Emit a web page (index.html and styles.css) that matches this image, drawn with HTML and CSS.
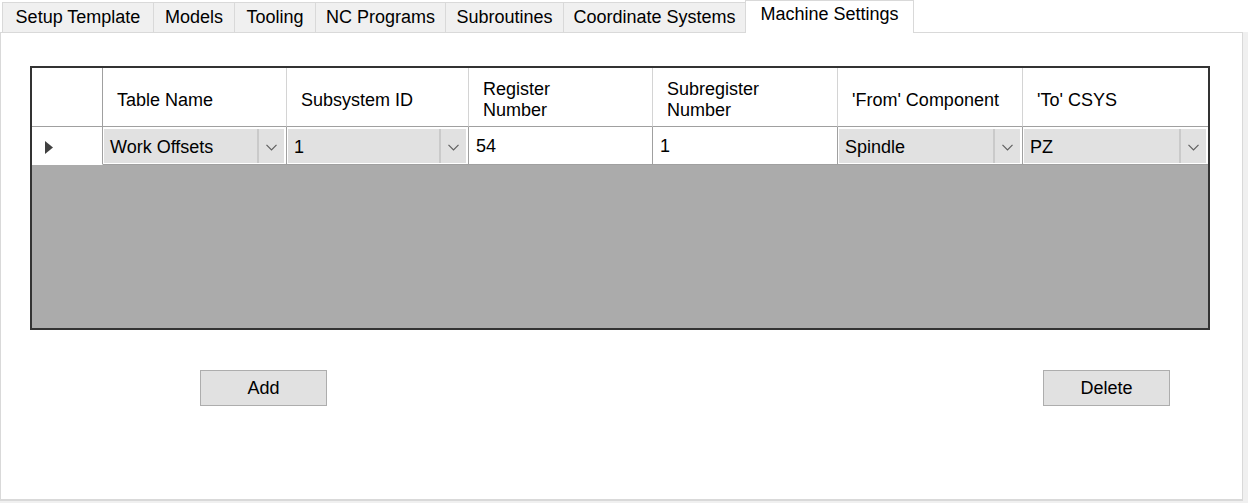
FILE: index.html
```html
<!DOCTYPE html>
<html>
<head>
<meta charset="utf-8">
<link rel="stylesheet" href="styles.css">
</head>
<body>
<div class="window">
  <div class="tabstrip">
    <div class="tab tab-setup">Setup Template</div>
    <div class="tab tab-models">Models</div>
    <div class="tab tab-tooling">Tooling</div>
    <div class="tab tab-nc">NC Programs</div>
    <div class="tab tab-sub">Subroutines</div>
    <div class="tab tab-coord">Coordinate Systems</div>
    <div class="tab tab-machine selected">Machine Settings</div>
  </div>
  <div class="panel">
    <div class="grid">
      <div class="hcell rowhead"></div>
      <div class="hcell">Table Name</div>
      <div class="hcell">Subsystem ID</div>
      <div class="hcell">Register<br>Number</div>
      <div class="hcell">Subregister<br>Number</div>
      <div class="hcell">'From' Component</div>
      <div class="hcell last">'To' CSYS</div>

      <div class="dcell rowhead"><svg class="arrow" width="8" height="13" viewBox="0 0 8 13"><polygon points="0,0 8,6.5 0,13" fill="#404040"/></svg></div>
      <div class="dcell combo-cell">
        <div class="combo"><span class="combo-text">Work Offsets</span><span class="combo-btn"><svg width="11" height="7" viewBox="0 0 11 7"><path d="M0.5 0.8 L5.5 5.8 L10.5 0.8" fill="none" stroke="#5f5f5f" stroke-width="1.2"/></svg></span></div>
      </div>
      <div class="dcell combo-cell">
        <div class="combo"><span class="combo-text">1</span><span class="combo-btn"><svg width="11" height="7" viewBox="0 0 11 7"><path d="M0.5 0.8 L5.5 5.8 L10.5 0.8" fill="none" stroke="#5f5f5f" stroke-width="1.2"/></svg></span></div>
      </div>
      <div class="dcell text-cell">54</div>
      <div class="dcell text-cell">1</div>
      <div class="dcell combo-cell">
        <div class="combo"><span class="combo-text">Spindle</span><span class="combo-btn"><svg width="11" height="7" viewBox="0 0 11 7"><path d="M0.5 0.8 L5.5 5.8 L10.5 0.8" fill="none" stroke="#5f5f5f" stroke-width="1.2"/></svg></span></div>
      </div>
      <div class="dcell combo-cell last">
        <div class="combo"><span class="combo-text">PZ</span><span class="combo-btn"><svg width="11" height="7" viewBox="0 0 11 7"><path d="M0.5 0.8 L5.5 5.8 L10.5 0.8" fill="none" stroke="#5f5f5f" stroke-width="1.2"/></svg></span></div>
      </div>
      <div class="empty"></div>
    </div>
    <div class="actions">
      <button class="btn">Add</button>
      <button class="btn">Delete</button>
    </div>
  </div>
</div>
</body>
</html>
```
FILE: styles.css
```css
* { box-sizing: border-box; }
html, body {
  margin: 0;
  padding: 0;
  background: #f0f0f0;
}
body {
  font-family: "Liberation Sans", Arial, sans-serif;
  font-size: 18px;
  color: #000;
}
.window {
  width: 1248px;
  height: 503px;
  display: flex;
  flex-direction: column;
}
.tabstrip {
  height: 32px;
  display: flex;
  align-items: flex-start;
  padding-left: 2px;
  background: #ffffff;
}
.tab {
  height: 30px;
  margin-top: 2px;
  background: #f0f0f0;
  border: 1px solid #d9d9d9;
  border-bottom: none;
  margin-right: -1px;
  line-height: 29px;
  text-align: center;
  white-space: nowrap;
  color: #000;
}
.tab-setup { width: 152px; }
.tab-models { width: 82px; }
.tab-tooling { width: 82px; }
.tab-nc { width: 131px; }
.tab-sub { width: 119px; }
.tab-coord { width: 183px; }
.tab.selected {
  width: 169px;
  height: 33px;
  margin-top: 0;
  background: #ffffff;
  line-height: 26px;
  position: relative;
  z-index: 2;
  border-color: #d9d9d9;
}
.panel {
  width: 1243px;
  height: 469px;
  background: #ffffff;
  border: 1px solid #d9d9d9;
  border-bottom-width: 2px;
  padding: 33px 32px 0 29px;
  display: flex;
  flex-direction: column;
}
.grid {
  width: 1180px;
  height: 264px;
  border: 2px solid #333333;
  background: #ababab;
  display: grid;
  grid-template-columns: 71px 184px 182px 184px 185px 185px 185px;
  grid-template-rows: 59px 38px 1fr;
}
.hcell {
  background: #ffffff;
  border-right: 1px solid #d4d4d4;
  border-bottom: 1px solid #a0a0a0;
  padding: 6px 0 0 14px;
  display: flex;
  align-items: center;
  line-height: 21px;
  white-space: nowrap;
}
.hcell.last { border-right: none; }
.dcell {
  background: #ffffff;
  border-right: 1px solid #a0a0a0;
  border-bottom: 1px solid #a0a0a0;
  display: flex;
  align-items: center;
  white-space: nowrap;
}
.dcell.last { border-right: none; }
.rowhead {
  border-right-color: #a0a0a0;
}
.dcell.rowhead {
  padding-left: 13px;
  border-bottom-color: #ffffff;
}
.arrow {
  display: block;
  margin-top: 3px;
}
.text-cell {
  padding: 2px 0 0 7px;
}
.combo-cell {
  padding: 2px 2px 1px 1px;
  align-items: stretch;
}
.combo {
  flex: 1;
  display: flex;
  background: #e1e1e1;
}
.combo-text {
  flex: 1;
  padding: 2px 0 0 6px;
  display: flex;
  align-items: center;
}
.combo-btn {
  width: 27px;
  border-left: 2px solid #cacaca;
  display: flex;
  align-items: center;
  justify-content: center;
  padding-top: 2px;
}
.empty {
  grid-column: 1 / -1;
  background: #ababab;
}
.actions {
  display: flex;
  justify-content: space-between;
  margin-top: 40px;
  padding: 0 40px 0 170px;
}
.btn {
  width: 127px;
  height: 36px;
  background: #e1e1e1;
  border: 1px solid #adadad;
  font-family: "Liberation Sans", Arial, sans-serif;
  font-size: 18px;
  color: #000;
  padding: 0;
}
```
